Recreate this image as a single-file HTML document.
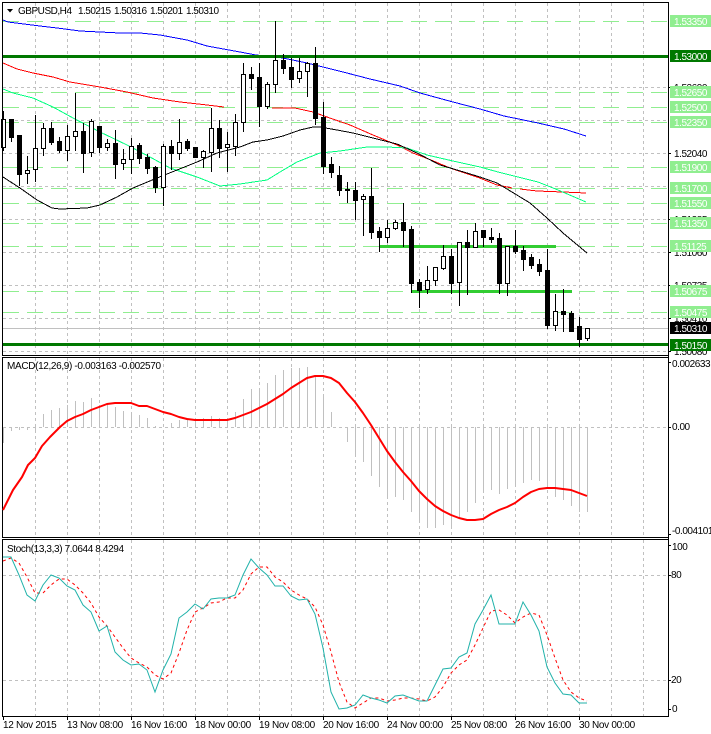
<!DOCTYPE html>
<html><head><meta charset="utf-8"><style>
html,body{margin:0;padding:0;background:#fff}
svg{display:block;font-family:"Liberation Sans",sans-serif;font-size:10px}
text{fill:#000}
.l text{fill:#fff;letter-spacing:-.45px}
.a text{letter-spacing:-.45px}
.t text{letter-spacing:-.3px}
</style></head><body>
<svg width="711" height="734" viewBox="0 0 711 734" xmlns="http://www.w3.org/2000/svg">
<rect width="711" height="734" fill="#fff"/>
<g shape-rendering="crispEdges" fill="none">
<!-- vertical grid -->
<path stroke="#c0c0c0" stroke-dasharray="3 3" d="M35.5 3V355M67.5 3V355M99.5 3V355M131.5 3V355M163.5 3V355M195.5 3V355M227.5 3V355M259.5 3V355M291.5 3V355M323.5 3V355M355.5 3V355M387.5 3V355M419.5 3V355M451.5 3V355M483.5 3V355M515.5 3V355M547.5 3V355M579.5 3V355M611.5 3V355M643.5 3V355
M35.5 358V537M67.5 358V537M99.5 358V537M131.5 358V537M163.5 358V537M195.5 358V537M227.5 358V537M259.5 358V537M291.5 358V537M323.5 358V537M355.5 358V537M387.5 358V537M419.5 358V537M451.5 358V537M483.5 358V537M515.5 358V537M547.5 358V537M579.5 358V537M611.5 358V537M643.5 358V537
M35.5 540V716M67.5 540V716M99.5 540V716M131.5 540V716M163.5 540V716M195.5 540V716M227.5 540V716M259.5 540V716M291.5 540V716M323.5 540V716M355.5 540V716M387.5 540V716M419.5 540V716M451.5 540V716M483.5 540V716M515.5 540V716M547.5 540V716M579.5 540V716M611.5 540V716M643.5 540V716
M3 87.5H668M3 120.5H668M3 153.5H668M3 186.5H668M3 219.5H668M3 252.5H668M3 285.5H668M3 318.5H668M3 351.5H668M3 427.5H668M3 575.5H668M3 680.5H668"/>
<!-- horizontal levels -->
<path stroke="#90ee90" stroke-dasharray="16 8" d="M3 21.5H668M3 92.5H668M3 107.5H668M3 122.5H668M3 167.5H668M3 188.5H668M3 203.5H668M3 223.5H668M3 246.5H668M3 291.5H668M3 312.5H668"/>
<path stroke="#c0c0c0" d="M3 328.5H668"/>
<!-- MAs -->
<polyline stroke="#0000ff" points="3,20 8,22 24,24 40,26 57,28 80,31 100,32 120,33 140,33 160,35 187,40 207,46 240,52 256,55 283,58 307,63 343,72 370,79 400,86 420,93 453,102 480,109 504,116 538,123 564,129 586,136"/>
<polyline stroke="#ff0000" points="3,63 17,69 33,73 53,77 70,82 100,87 127,92 153,98 180,102 207,105 224,107"/>
<polyline stroke="#ff0000" points="272,108 295,108 313,112 327,117 350,125 373,135 397,145 413,153 431,160 450,168 477,177 497,185 512,188"/>
<polyline stroke="#ff0000" points="520,189 537,191 563,192 586,193"/>
<polyline stroke="#00ff80" points="3,89 13,93 33,98 53,107 73,118 100,132 127,145 150,157 170,168 197,177 220,186 240,184 267,180 280,172 297,162 320,153 340,151 367,147 387,147 407,148 427,155 453,161 480,167 498,172 538,182 558,190 586,202"/>
<polyline stroke="#000" points="3,177 20,188 37,200 52,208 60,209 87,208 100,205 117,197 133,188 157,178 177,170 197,162 217,153 240,147 253,142 267,140 283,136 300,130 313,127 320,127 337,130 353,133 373,138 397,144 417,153 440,165 457,170 480,177 497,183 507,189 530,203 547,218 563,233 587,253"/>
<!-- thick levels -->
<rect x="3" y="55" width="665" height="3" fill="#007800"/>
<rect x="3" y="343" width="665" height="3" fill="#007800"/>
<rect x="379" y="245" width="177" height="3" fill="#32cd32"/>
<rect x="411" y="290" width="161" height="3" fill="#32cd32"/>
<!-- wicks -->
<path transform="translate(.5 0)" stroke="#000" d="M3 111V151M11 119V142M19 135V186M27 156V184M35 115V182M43 123V156M51 122V145M59 137V153M67 125V161M75 93V151M83 123V173M91 119V157M99 126V153M107 139V151M115 130V179M123 149V170M131 138V174M139 143V164M147 154V174M155 166V193M163 144V206M171 140V170M179 119V160M187 139V151M195 147V158M203 150V168M211 108V172M219 120V158M227 132V172M235 114V156M243 63V132M251 67V90M259 63V127M267 82V109M275 21V93M283 54V74M291 58V88M299 58V83M307 62V97M315 47V125M323 102V174M331 157V178M339 166V196M347 182V203M355 182V220M363 194V236M371 168V239M379 227V252M387 220V243M395 220V230M403 203V247M411 226V293M419 279V308M427 266V294M435 267V286M443 245V270M451 249V294M459 243V306M467 230V295M475 223V248M483 230V247M491 228V243M499 233V294M507 246V296M515 230V254M523 246V271M531 254V269M539 259V276M547 249V329M555 294V331M563 289V332M571 311V332M579 317V347M587 328V341"/>
<!-- black bodies -->
<path fill="#000" d="M9 119h5V138h-5zM17 135h5V175h-5zM49 128h5V143h-5zM57 141h5V151h-5zM81 131h5V154h-5zM97 126h5V148h-5zM113 143h5V165h-5zM137 145h5V159h-5zM145 157h5V169h-5zM153 167h5V188h-5zM169 146h5V154h-5zM185 141h5V149h-5zM193 147h5V158h-5zM217 128h5V149h-5zM249 74h5V79h-5zM257 77h5V107h-5zM281 60h5V69h-5zM289 67h5V80h-5zM313 63h5V119h-5zM321 117h5V167h-5zM329 164h5V173h-5zM337 175h5V191h-5zM345 189h5V191h-5zM353 190h5V201h-5zM369 196h5V233h-5zM377 231h5V238h-5zM401 222h5V231h-5zM409 229h5V284h-5zM417 282h5V291h-5zM449 256h5V284h-5zM465 242h5V248h-5zM481 230h5V238h-5zM489 237h5V240h-5zM497 238h5V284h-5zM513 246h5V252h-5zM521 250h5V260h-5zM529 257h5V266h-5zM537 264h5V272h-5zM545 270h5V326h-5zM561 311h5V315h-5zM569 313h5V332h-5zM577 326h5V340h-5z"/>
<!-- hollow bodies -->
<path transform="translate(.5 .5)" fill="#fff" stroke="#000" d="M1 119h4V147h-4zM25 170h4V173h-4zM33 148h4V169h-4zM41 128h4V148h-4zM65 136h4V150h-4zM73 131h4V136h-4zM89 121h4V152h-4zM105 143h4V147h-4zM121 159h4V163h-4zM129 146h4V159h-4zM161 146h4V187h-4zM177 142h4V153h-4zM201 151h4V157h-4zM209 128h4V152h-4zM225 144h4V147h-4zM233 122h4V146h-4zM241 74h4V122h-4zM265 84h4V106h-4zM273 60h4V84h-4zM297 71h4V78h-4zM305 63h4V71h-4zM361 196h4V199h-4zM385 228h4V237h-4zM393 222h4V228h-4zM425 280h4V289h-4zM433 267h4V280h-4zM441 256h4V268h-4zM457 242h4V282h-4zM473 231h4V247h-4zM505 246h4V283h-4zM553 311h4V325h-4zM585 328h4V338h-4z"/>
<!-- MACD histogram -->
<path transform="translate(.5 0)" stroke="#c0c0c0" d="M3 427V443M11 427V431M19 427V430M27 427V430M35 427V430M43 427V414M51 427V410M59 427V408M67 427V405M75 427V401M83 427V402M91 427V398M99 427V405M107 427V403M115 427V407M123 427V411M131 427V412M139 427V415M147 427V418M155 427V426M163 427V424M171 427V423M179 427V420M187 427V418M195 427V418M203 427V418M211 427V416M219 427V418M227 427V418M235 427V412M243 427V399M251 427V389M259 427V388M267 427V383M275 427V375M283 427V370M291 427V368M299 427V368M307 427V367M315 427V377M323 427V397M331 427V412M347 427V442M355 427V454M363 427V462M371 427V476M379 427V487M387 427V497M395 427V497M403 427V500M411 427V512M419 427V523M427 427V528M435 427V528M443 427V525M451 427V527M459 427V518M467 427V512M475 427V503M483 427V493M491 427V490M499 427V494M507 427V489M515 427V485M523 427V483M531 427V480M539 427V481M547 427V487M555 427V497M563 427V500M571 427V506M579 427V512M587 427V512"/>
<!-- frames -->
<path stroke="#000" d="M2 2.5H669M2.5 2V356M2 355.5H669M2 357.5H669M2.5 357V538M2 537.5H669M2 539.5H669M2.5 539V717M2 716.5H669M668.5 2V717
M668 87.5h3M668 153.5h3M668 219.5h3M668 252.5h3M668 285.5h3M668 318.5h3M668 351.5h3M668 362.5h3M668 427.5h3M668 534.5h3M668 545.5h3M668 575.5h3M668 680.5h3M668 709.5h3
M3.5 717v3M67.5 717v3M131.5 717v3M195.5 717v3M259.5 717v3M323.5 717v3M387.5 717v3M451.5 717v3M515.5 717v3M579.5 717v3"/>
</g>
<g fill="none">
<polyline stroke="#ff0000" stroke-width="2" stroke-linejoin="round" points="3,510 13,490 22,477 28,465 35,458 42,446 50,437 60,427 67,421 75,417 83,414 91,410 99,407 107,404 115,403 131,403 139,406 147,406 155,409 163,412 171,414 179,417 187,419 195,420 227,420 235,418 243,415 251,412 259,408 267,404 275,399 283,394 291,388 299,383 307,378 315,376 323,376 331,378 339,383 347,393 355,402 363,413 371,425 379,438 387,451 395,462 403,472 411,481 419,491 427,499 435,506 443,511 451,515 459,518 467,520 475,520 483,519 491,514 499,510 507,507 515,503 523,497 531,492 539,489 547,488 555,488 563,489 571,490 579,493 587,496"/>
<polyline stroke="#ff0000" stroke-dasharray="3 3" points="3,561 11,558 19,563 27,577 35,593 43,593 51,585 59,579 67,579 75,585 83,593 91,603 99,617 107,626 115,637 123,648 131,658 139,663 147,667 155,675 163,679 171,673 179,653 187,630 195,612 203,608 211,603 219,602 227,598 235,598 243,590 251,574 259,567 267,567 275,577 283,582 291,590 299,595 307,599 315,607 323,625 331,652 339,682 347,702 355,708 363,703 371,698 379,698 387,701 395,700 403,698 411,698 419,699 427,701 435,697 443,687 451,673 459,665 467,660 475,645 483,628 491,611 499,610 507,615 515,623 523,617 531,613 539,615 547,635 555,658 563,680 571,692 579,698 587,701"/>
<polyline stroke="#20b2aa" points="3,557 11,557 19,575 27,595 35,601 43,585 51,575 59,578 67,586 75,590 83,605 91,612 99,631 107,626 115,652 123,660 131,665 139,664 147,670 155,692 163,670 171,654 179,618 187,612 195,604 203,609 211,599 219,598 227,598 235,595 243,575 251,559 259,568 267,575 275,586 283,586 291,596 299,600 307,599 315,614 323,648 331,692 339,709 347,708 355,705 363,695 371,698 379,700 387,703 395,696 403,695 411,698 419,701 427,701 435,685 443,669 451,668 459,657 467,653 475,624 483,610 491,595 499,624 515,624 523,602 531,615 539,631 547,667 555,683 563,694 571,695 579,703 587,703"/>
</g>
<!-- under-labels -->
<g class="a">
<text x="674" y="91">1.52690</text>
<text x="674" y="157">1.52040</text>
<text x="674" y="223">1.51385</text>
<text x="674" y="256">1.51060</text>
<text x="674" y="289">1.50735</text>
<text x="674" y="322">1.50410</text>
<text x="674" y="355">1.50080</text>
<text x="672" y="367">0.002633</text>
<text x="672" y="430">0.00</text>
<text x="672" y="534">-0.004101</text>
<text x="672" y="550">100</text>
<text x="671" y="578">80</text>
<text x="671" y="683">20</text>
<text x="672" y="712">0</text>
</g>
<!-- price labels -->
<g shape-rendering="crispEdges">
<rect x="670" y="15" width="41" height="12" fill="#90ee90"/>
<rect x="670" y="50" width="41" height="12" fill="#007800"/>
<rect x="670" y="86" width="41" height="12" fill="#90ee90"/>
<rect x="670" y="101" width="41" height="12" fill="#90ee90"/>
<rect x="670" y="116" width="41" height="12" fill="#90ee90"/>
<rect x="670" y="161" width="41" height="12" fill="#90ee90"/>
<rect x="670" y="182" width="41" height="12" fill="#90ee90"/>
<rect x="670" y="197" width="41" height="12" fill="#90ee90"/>
<rect x="670" y="217" width="41" height="12" fill="#90ee90"/>
<rect x="670" y="240" width="41" height="12" fill="#90ee90"/>
<rect x="670" y="285" width="41" height="12" fill="#90ee90"/>
<rect x="670" y="306" width="41" height="12" fill="#90ee90"/>
<rect x="670" y="322" width="41" height="12" fill="#000"/>
<rect x="670" y="339" width="41" height="12" fill="#007800"/>
</g>
<g class="l">
<text x="674" y="25">1.53350</text>
<text x="674" y="60">1.53000</text>
<text x="674" y="96">1.52650</text>
<text x="674" y="111">1.52500</text>
<text x="674" y="126">1.52350</text>
<text x="674" y="171">1.51900</text>
<text x="674" y="192">1.51700</text>
<text x="674" y="207">1.51550</text>
<text x="674" y="227">1.51350</text>
<text x="674" y="250">1.51125</text>
<text x="674" y="295">1.50675</text>
<text x="674" y="316">1.50475</text>
<text x="674" y="332">1.50310</text>
<text x="674" y="349">1.50150</text>
</g>
<!-- legend -->
<path d="M7 9h6l-3 3.5z" fill="#000"/>
<text x="18" y="14" textLength="54" lengthAdjust="spacing">GBPUSD,H4</text>
<text x="78" y="14" textLength="33" lengthAdjust="spacing">1.50215</text>
<text x="114" y="14" textLength="33" lengthAdjust="spacing">1.50316</text>
<text x="150" y="14" textLength="33" lengthAdjust="spacing">1.50201</text>
<text x="186" y="14" textLength="33" lengthAdjust="spacing">1.50310</text>
<text x="7" y="369" textLength="154" lengthAdjust="spacing">MACD(12,26,9) -0.003163 -0.002570</text>
<text x="7" y="552" textLength="117" lengthAdjust="spacing">Stoch(13,3,3) 7.0644 8.4294</text>
<!-- time axis -->
<g class="t">
<text x="3" y="728">12 Nov 2015</text>
<text x="67" y="728">13 Nov 08:00</text>
<text x="131" y="728">16 Nov 16:00</text>
<text x="195" y="728">18 Nov 00:00</text>
<text x="259" y="728">19 Nov 08:00</text>
<text x="323" y="728">20 Nov 16:00</text>
<text x="387" y="728">24 Nov 00:00</text>
<text x="451" y="728">25 Nov 08:00</text>
<text x="515" y="728">26 Nov 16:00</text>
<text x="579" y="728">30 Nov 00:00</text>
</g>
</svg>
</body></html>
